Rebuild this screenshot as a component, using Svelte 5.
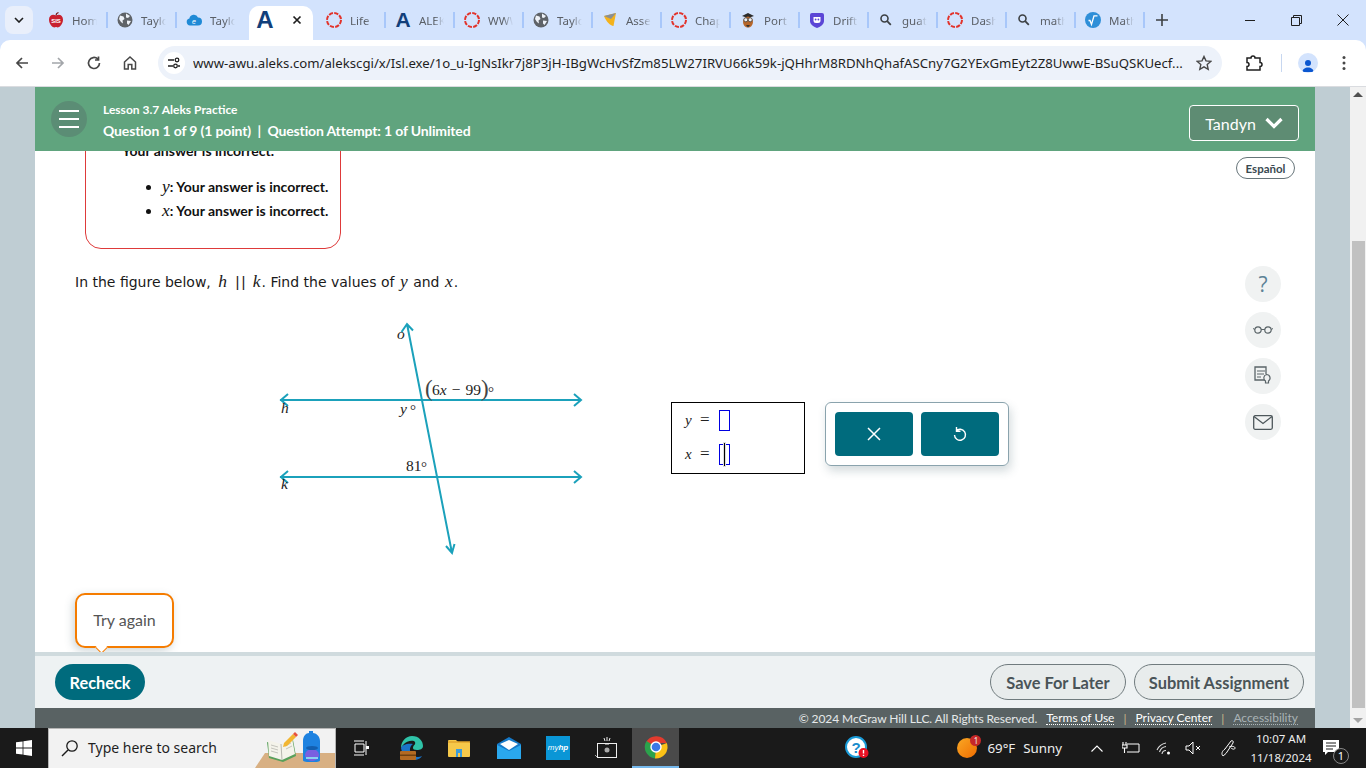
<script>
	const tabs = [
		{ icon: 'sis', label: 'Home' },
		{ icon: 'globe', label: 'Taylor' },
		{ icon: 'cloud', label: 'Taylor' },
		{ icon: 'A', label: '', active: true },
		{ icon: 'ring', label: 'Life' },
		{ icon: 'A', label: 'ALEKS' },
		{ icon: 'ring', label: 'WWW' },
		{ icon: 'globe', label: 'Taylor' },
		{ icon: 'shield', label: 'Assess' },
		{ icon: 'ring', label: 'Chap' },
		{ icon: 'owl', label: 'Port' },
		{ icon: 'drift', label: 'Drift' },
		{ icon: 'search', label: 'guat' },
		{ icon: 'ring', label: 'Dash' },
		{ icon: 'search', label: 'math' },
		{ icon: 'sqrt', label: 'Math' }
	];
	const url =
		'www-awu.aleks.com/alekscgi/x/Isl.exe/1o_u-IgNsIkr7j8P3jH-IBgWcHvSfZm85LW27IRVU66k59k-jQHhrM8RDNhQhafASCny7G2YExGmEyt2Z8UwwE-BSuQSKUecf...';
</script>

{#snippet tabIcon(name)}
	{#if name === 'A'}
		<span class="logo-a">A</span>
	{:else}
		<svg class="fav" viewBox="0 0 16 16" width="16" height="16">
			{#if name === 'sis'}
				<path d="M8 3.500C5 1.800 1 3 1 7.500 1 12 4.500 15.500 6.500 15.500c.8 0 1-.4 1.500-.4s.7.4 1.500.4C11.500 15.500 15 12 15 7.500 15 3 11 1.800 8 3.500z" fill="#c8202f" />
				<path d="M8 3.500C8 2 9 1 10.500.5" stroke="#7a1c1c" stroke-width="1.200" fill="none" />
				<text x="8" y="11" font-size="6" font-weight="700" fill="#fff" text-anchor="middle" font-family="Liberation Sans">SIS</text>
			{:else if name === 'globe'}
				<circle cx="8" cy="8" r="7.500" fill="#5f6368" />
				<path d="M3 3.500l3.500 1 1 2.500-2 1.500.5 3-2-1.500L2 7zM9 1.500l4 2.500-2 2-2-.5zM10 8.500l4 .5-2.500 4-1.500-1.500z" fill="#eef2f8" />
			{:else if name === 'cloud'}
				<path d="M4 13.500a3.500 3.500 0 0 1-.6-6.900A4.500 4.500 0 0 1 12 5.500a4 4 0 0 1 0 8z" fill="#1f8ad6" />
				<text x="8" y="11.500" font-size="7" fill="#fff" text-anchor="middle" font-family="Liberation Sans" font-style="italic">e</text>
			{:else if name === 'ring'}
				<circle cx="8" cy="8" r="7" fill="none" stroke="#e2332b" stroke-width="2" stroke-dasharray="4.200 1.300" />
			{:else if name === 'shield'}
				<path d="M2 4l12-3-2.500 13C8 13.500 4.500 10 2 4z" fill="#f4b21b" />
				<path d="M2 4l12-3-5 6z" fill="#8a8f94" />
			{:else if name === 'owl'}
				<path d="M2 4l6-3 6 3-6 2z" fill="#2b2b2b" />
				<ellipse cx="8" cy="10" rx="5" ry="5.500" fill="#b5662a" />
				<circle cx="5.800" cy="7.800" r="2" fill="#eee" stroke="#333" stroke-width=".7" />
				<circle cx="10.200" cy="7.800" r="2" fill="#eee" stroke="#333" stroke-width=".7" />
				<path d="M6 13l2 2.500 2-2.500z" fill="#333" />
			{:else if name === 'drift'}
				<path d="M3 1h10a2 2 0 0 1 2 2v6c0 3.500-4 6-7 7-3-1-7-3.500-7-7V3a2 2 0 0 1 2-2z" fill="#5b46d6" />
				<path d="M4.500 5h7v3.500a2.500 2.500 0 0 1-2.500 2.500H7a2.500 2.500 0 0 1-2.500-2.500z" fill="#fff" />
				<circle cx="6.600" cy="7.500" r=".9" fill="#5b46d6" />
				<circle cx="9.400" cy="7.500" r=".9" fill="#5b46d6" />
			{:else if name === 'search'}
				<circle cx="6.500" cy="6.500" r="3.500" fill="none" stroke="#3c4043" stroke-width="1.600" />
				<path d="M9.200 9.200l3.600 3.600" stroke="#3c4043" stroke-width="1.800" />
			{:else if name === 'sqrt'}
				<circle cx="8" cy="8" r="8" fill="#2f8fd8" />
				<path d="M3.500 8.500h1.500l1.500 4L9 3.800h3.500" fill="none" stroke="#fff" stroke-width="1.300" />
			{/if}
		</svg>
	{/if}
{/snippet}

<div class="screen">
	<div class="tabstrip">
		<button class="tab-search" aria-label="Search tabs">
			<svg viewBox="0 0 10 6" width="10" height="6"><path d="M1 1l4 4 4-4" fill="none" stroke="#1f1f1f" stroke-width="1.600" /></svg>
		</button>
		<div class="tabs">
			{#each tabs as tab}
				<div class="tab" class:active={tab.active}>
					<span class="fav-wrap">{@render tabIcon(tab.icon)}</span>
					{#if tab.active}
						<svg class="close" viewBox="0 0 10 10" width="10" height="10"><path d="M1.500 1.500l7 7m0-7l-7 7" stroke="#1f1f1f" stroke-width="1.700" /></svg>
					{:else}
						<span class="tab-title">{tab.label}</span>
					{/if}
				</div>
			{/each}
			<svg class="plus" viewBox="0 0 12 12" width="12" height="12"><path d="M6 0v12M0 6h12" stroke="#3c4043" stroke-width="1.600" /></svg>
		</div>
		<div class="window-btns">
			<svg viewBox="0 0 10 10" width="10" height="10"><path d="M0 5.500h10" stroke="#1f1f1f" stroke-width="1" /></svg>
			<svg viewBox="0 0 11 11" width="11" height="11"><path d="M.5 2.500h8v8h-8zM2.500 2.500v-2h8v8h-2" fill="none" stroke="#1f1f1f" stroke-width="1" /></svg>
			<svg viewBox="0 0 12 12" width="12" height="12"><path d="M.5.500l11 11m0-11l-11 11" stroke="#1f1f1f" stroke-width="1" /></svg>
		</div>
	</div>

	<div class="toolbar">
		<svg class="nav nav-back" viewBox="0 0 16 16" width="16" height="16"><path d="M14 8H3M8 3L3 8l5 5" fill="none" stroke="#474747" stroke-width="1.700" /></svg>
		<svg class="nav" viewBox="0 0 16 16" width="16" height="16"><path d="M2 8h11M8 3l5 5-5 5" fill="none" stroke="#a3a6aa" stroke-width="1.700" /></svg>
		<svg class="nav" viewBox="0 0 16 16" width="16" height="16"><path d="M13.500 8A5.500 5.500 0 1 1 11.800 4M12.500 1.500V5H9" fill="none" stroke="#474747" stroke-width="1.700" /></svg>
		<svg class="nav" viewBox="0 0 16 16" width="16" height="16"><path d="M2.500 7L8 2l5.500 5v7H9.800V9.500H6.200V14H2.500z" fill="none" stroke="#474747" stroke-width="1.500" /></svg>
		<div class="omnibox">
			<span class="site-info">
				<svg viewBox="0 0 14 14" width="14" height="14"><path d="M1 4h6M11 10h2M1 10h5" stroke="#1f1f1f" stroke-width="1.400" /><circle cx="10" cy="4" r="1.800" fill="none" stroke="#1f1f1f" stroke-width="1.300" /><circle cx="8.500" cy="10" r="1.800" fill="none" stroke="#1f1f1f" stroke-width="1.300" /></svg>
			</span>
			<span class="url">{url}</span>
			<svg class="star" viewBox="0 0 16 16" width="16" height="16"><path d="M8 1.500l2 4.400 4.800.5-3.600 3.200 1 4.700L8 11.900l-4.200 2.400 1-4.700L1.200 6.400 6 5.900z" fill="none" stroke="#474747" stroke-width="1.400" /></svg>
		</div>
		<svg class="ext" viewBox="0 0 18 18" width="18" height="18"><path d="M2 4h4a2 2 0 0 1 4 0h5v4.500a2 2 0 0 1 0 4V16H2v-3.500a2 2 0 0 0 0-4z" fill="none" stroke="#1f1f1f" stroke-width="1.500" /></svg>
		<span class="tool-sep"></span>
		<span class="avatar">
			<svg viewBox="0 0 14 14" width="14" height="14"><circle cx="7" cy="4" r="3" fill="#0b57d0" /><path d="M1.500 13c0-3 2.500-4.500 5.500-4.500s5.500 1.500 5.500 4.500z" fill="#0b57d0" /></svg>
		</span>
		<svg class="dots" viewBox="0 0 4 16" width="4" height="16"><circle cx="2" cy="2.500" r="1.500" fill="#474747" /><circle cx="2" cy="8" r="1.500" fill="#474747" /><circle cx="2" cy="13.500" r="1.500" fill="#474747" /></svg>
	</div>

	<div class="page">
		<div class="gutter"></div>
		<div class="main">
			<header class="lesson-bar">
				<span class="burger"><i></i><i></i><i></i></span>
				<div class="lesson-text">
					<div class="lesson-name">Lesson 3.7 Aleks Practice</div>
					<div class="lesson-progress">Question 1 of 9 (1 point) &nbsp;|&nbsp; Question Attempt: 1 of Unlimited</div>
				</div>
				<button class="user-btn">
					Tandyn
					<svg viewBox="0 0 18 12" width="18" height="12"><path d="M1.500 2l7.500 7.500L16.500 2" fill="none" stroke="#fff" stroke-width="3.200" /></svg>
				</button>
			</header>

			<div class="workspace">
				<div class="question">
					<div class="feedback">
						<p>Your answer is incorrect.</p>
						<ul>
							<li><i class="math">y</i>: Your answer is incorrect.</li>
							<li><i class="math">x</i>: Your answer is incorrect.</li>
						</ul>
					</div>

					<p class="prompt">
						In the figure below, <i class="math">h</i>&nbsp;<span class="parallel">||</span>&nbsp;<i class="math">k</i>. Find the values of <i class="math">y</i> and <i class="math">x</i>.
					</p>

					<div class="problem">
						<svg class="figure" viewBox="0 0 340 250" width="340" height="250">
							<g fill="none" stroke="#1ba1bb" stroke-width="2">
								<path d="M20 85H321M28 79l-7 6 7 6M314 79l7 6-7 6" />
								<path d="M20 162H321M28 156l-7 6 7 6M314 156l7 6-7 6" />
								<path d="M147 9L192 238M141.500 17L147 9l6 6.500M186 231l6 7 2.500-9" />
							</g>
							<g class="fig-label">
								<text x="137" y="24" font-style="italic" font-size="13">o</text>
								<text x="21" y="98" font-style="italic" font-size="13">h</text>
								<text x="21" y="174" font-style="italic" font-size="13">k</text>
								<text x="140" y="99" font-style="italic">y</text>
								<text x="150" y="100" class="deg">°</text>
								<text x="146" y="156">81</text>
								<text x="161" y="157" class="deg">°</text>
								<text x="165" y="81" class="paren">(</text>
								<text x="172" y="80">6<tspan font-style="italic">x</tspan><tspan dx="5">−</tspan><tspan dx="5">99</tspan></text>
								<text x="221" y="81" class="paren">)</text>
								<text x="228" y="82" class="deg">°</text>
							</g>
						</svg>

						<div class="answers">
							<div class="eq"><i class="math">y</i><span>=</span><span class="slot"></span></div>
							<div class="eq"><i class="math">x</i><span>=</span><span class="slot"><span class="ibeam"></span></span></div>
						</div>

						<div class="tools">
							<button class="tool-btn" aria-label="Clear">
								<svg viewBox="0 0 14 14" width="14" height="14"><path d="M1 1l12 12m0-12L1 13" stroke="#fff" stroke-width="1.500" /></svg>
							</button>
							<button class="tool-btn" aria-label="Undo">
								<svg viewBox="0 0 14 16" width="14" height="16"><path d="M3 5a5.500 5.500 0 1 1-1.500 4M3.500 1v4.200h4" fill="none" stroke="#fff" stroke-width="1.400" /></svg>
							</button>
						</div>
					</div>
				</div>

				<aside class="rail">
					<span class="lang">Español</span>
					<span class="rail-btn help">?</span>
					<span class="rail-btn">
						<svg viewBox="0 0 20 8" width="20" height="8"><circle cx="5" cy="4" r="3.200" fill="none" stroke="#5a6468" stroke-width="1.200" /><circle cx="15" cy="4" r="3.200" fill="none" stroke="#5a6468" stroke-width="1.200" /><path d="M8 3.500h4M1.800 3.500L0 2.500M18.200 3.500L20 2.500" stroke="#5a6468" stroke-width="1" /></svg>
					</span>
					<span class="rail-btn">
						<svg viewBox="0 0 18 20" width="18" height="20"><path d="M12 14H1V1h11v7" fill="none" stroke="#5a6468" stroke-width="1.300" /><path d="M3 5h8M3 8h7M3 11h4" stroke="#5a6468" stroke-width="1.200" /><path d="M12.500 8.500a3.500 3.500 0 0 1 2 6.400V17h-3v-2.100a3.500 3.500 0 0 1 1-6.400z" fill="#f0f2f2" stroke="#5a6468" stroke-width="1.200" /></svg>
					</span>
					<span class="rail-btn">
						<svg viewBox="0 0 20 15" width="20" height="15"><rect x=".7" y=".7" width="18.600" height="13.600" rx="1.500" fill="none" stroke="#4d575b" stroke-width="1.300" /><path d="M1 1.500l9 7 9-7" fill="none" stroke="#4d575b" stroke-width="1.300" /></svg>
					</span>
				</aside>

				<div class="bubble">Try again</div>
			</div>

			<div class="actions">
				<button class="recheck">Recheck</button>
				<div class="actions-right">
					<button class="outline save">Save For Later</button>
					<button class="outline submit">Submit Assignment</button>
				</div>
			</div>

			<footer class="legal">
				<span class="copy">© 2024 McGraw Hill LLC. All Rights Reserved.</span>
				<a href="#terms">Terms of Use</a>
				<span class="bar">|</span>
				<a href="#privacy">Privacy Center</a>
				<span class="bar">|</span>
				<a class="dim" href="#a11y">Accessibility</a>
			</footer>
		</div>
		<div class="gutter right"></div>
		<div class="scrollbar">
			<span class="arrow up"></span>
			<span class="thumb"></span>
			<span class="arrow down"></span>
		</div>
	</div>

	<div class="taskbar">
		<span class="start">
			<svg viewBox="0 0 16 16" width="16" height="16"><path d="M0 2.300l6.600-.9v6.200H0zM7.400 1.300L16 0v7.600H7.400zM0 8.400h6.600v6.200L0 13.700zM7.400 8.400H16V16l-8.600-1.300z" fill="#fff" /></svg>
		</span>
		<div class="searchbox">
			<svg viewBox="0 0 18 18" width="18" height="18"><circle cx="11" cy="7" r="5.200" fill="none" stroke="#1a1a1a" stroke-width="1.300" /><path d="M7 11l-6 6" stroke="#1a1a1a" stroke-width="1.400" /></svg>
			<span>Type here to search</span>
			<svg class="deco" viewBox="0 0 80 40" width="80" height="40">
				<path d="M0 40l10-15h70v15z" fill="#d8b083" />
				<path d="M12 14l14 4 12-6 3 16-13 6-14-4z" fill="#58a05a" />
				<path d="M13 12l13 4 11-6 3 16-13 6-13-4z" fill="#f4f3ea" />
				<path d="M26 16l1 16" stroke="#b8b8b0" />
				<path d="M16 17l7 2M16 20l7 2M16 23l7 2M30 18l6-3M31 21l6-3" stroke="#c4c4bc" />
				<path d="M29 15l9-9 3 3-9 9-4 1z" fill="#f2b632" />
				<path d="M38 6l2-2 3 3-2 2z" fill="#e8523f" />
				<path d="M48 13c0-5 3-8 6-8v-2h4v2c3 0 7 3 7 8v19c0 2-3 2-8 2s-9 0-9-2z" fill="#1e82e0" />
				<ellipse cx="57" cy="27" rx="7" ry="6" fill="#7a5fe0" />
				<path d="M51 29h12v2H51z" fill="#8ad0f0" />
				<ellipse cx="57" cy="20" rx="6" ry="2" fill="#135fb0" />
			</svg>
		</div>
		<svg class="tb-icon taskview" viewBox="0 0 16 16" width="16" height="16"><path d="M1 1h10M1 15h10M2 4h9v8H2zM13 1v14" fill="none" stroke="#fff" stroke-width="1" /><rect x="13" y="6" width="3" height="3" fill="#fff" /></svg>
		<svg class="tb-icon edge" viewBox="0 0 26 26" width="26" height="26">
			<path d="M2 13C2 6 7 1 13 1c7 0 11 5 11 10 0 3-3 4-6 4-3 0-4-1-4-2 0-3 3-3 2-6-1-2-8-2-12 3z" fill="#2fc3a8" />
			<path d="M2 13c1 7 7 12 13 12 4 0 7-2 8-4-4 2-9 1-11-3-2-3-1-7 2-9C8 8 3 10 2 13z" fill="#1a74c8" />
			<rect x="1" y="16" width="16" height="9" rx="1" fill="#b36a22" /><rect x="1" y="19.500" width="16" height="1.500" fill="#70400f" />
		</svg>
		<svg class="tb-icon folder" viewBox="0 0 22 18" width="22" height="18">
			<path d="M0 2a1 1 0 0 1 1-1h7l2 2h11a1 1 0 0 1 1 1v13a1 1 0 0 1-1 1H1a1 1 0 0 1-1-1z" fill="#f5c84a" />
			<path d="M0 3h22" stroke="#e0a52c" stroke-width="1.500" />
			<path d="M8 10h6v8h-2v-4h-2v4H8z" fill="#3c9bd8" />
		</svg>
		<svg class="tb-icon mail" viewBox="0 0 24 22" width="24" height="22">
			<path d="M0 7l12-7 12 7v15H0z" fill="#1579c8" />
			<path d="M3 7l9-4 9 4-9 6z" fill="#fff" />
			<path d="M0 8l12 6 12-6v14H0z" fill="#2aa8ee" />
		</svg>
		<span class="myhp">my<b>hp</b></span>
		<svg class="tb-icon camera" viewBox="0 0 24 22" width="24" height="22">
			<rect x="2.500" y="6.500" width="19" height="14" fill="none" stroke="#eee" stroke-width="1" />
			<circle cx="12" cy="13" r="2.500" fill="#aaa" />
			<path d="M9 1l1 3M12 0v4M15 1l-1 3M10 7h4" stroke="#eee" stroke-width="1" />
			<path d="M0 18l2 2" stroke="#aaa" />
		</svg>
		<span class="chrome-slot">
			<svg viewBox="0 0 24 24" width="24" height="24">
				<path d="M12 12L2 7.500A11.500 11.500 0 0 1 22.800 8H12z" fill="#e33b2e" />
				<path d="M12 12L2.500 6A11.500 11.500 0 0 0 11 23.500z" fill="#2ba24c" />
				<path d="M12 12l-1 11.500A11.500 11.500 0 0 0 22.800 8z" fill="#fbc116" />
				<circle cx="12" cy="12" r="5.700" fill="#fff" /><circle cx="12" cy="12" r="4.300" fill="#3b78e7" />
			</svg>
		</span>
		<span class="helper">
			<svg viewBox="0 0 24 24" width="24" height="24">
				<circle cx="11" cy="11" r="10" fill="#fff" stroke="#1a9bd8" stroke-width="2" />
				<text x="11" y="16.500" text-anchor="middle" font-size="15" font-weight="700" fill="#1a8ccc" font-family="Liberation Sans">?</text>
				<circle cx="18.500" cy="17" r="5" fill="#e81123" />
				<path d="M18.500 14v3.500M18.500 18.700v1.200" stroke="#fff" stroke-width="1.400" />
			</svg>
		</span>
		<span class="spacer"></span>
		<span class="weather">
			<span class="sun"><span class="badge">1</span></span>
			<span class="temp">69°F</span>
			<span class="cond">Sunny</span>
		</span>
		<svg class="tray chev" viewBox="0 0 12 7" width="12" height="7"><path d="M.5 6.500L6 1l5.500 5.500" fill="none" stroke="#fff" stroke-width="1.100" /></svg>
		<svg class="tray batt" viewBox="0 0 18 12" width="18" height="12"><path d="M5 2h12v8H5" fill="none" stroke="#fff" stroke-width="1" /><path d="M1 0v3M4 0v3M0 3h5v3H0zM2.500 6v5" fill="none" stroke="#fff" stroke-width="1.100" /></svg>
		<svg class="tray wifi" viewBox="0 0 15 14" width="15" height="14"><path d="M1 9a12 12 0 0 1 9-7M3.500 11a8 8 0 0 1 6.500-5.500M6 13a4 4 0 0 1 4-3.500" fill="none" stroke="#ddd" stroke-width="1.100" /><circle cx="12.500" cy="12" r="1.500" fill="#fff" /></svg>
		<svg class="tray vol" viewBox="0 0 16 14" width="16" height="14"><path d="M1 5h3l4-4v12L4 9H1z" fill="none" stroke="#fff" stroke-width="1" /><path d="M11 5l4 4m0-4l-4 4" stroke="#fff" stroke-width="1" /></svg>
		<svg class="tray pen" viewBox="0 0 18 18" width="18" height="18"><path d="M3 17C1 15 2 12 5 10l6-8c1-1 3 0 2 2l-6 9c-1 2-3 3-4 4zM9 8c2-1 6-1 6 1s-3 1-4 0" fill="none" stroke="#fff" stroke-width="1" /></svg>
		<span class="clock"><span>10:07 AM</span><span>11/18/2024</span></span>
		<span class="notify">
			<svg viewBox="0 0 18 16" width="18" height="16"><path d="M0 0h16v12H5l-3 3v-3H0z" fill="#fff" /><path d="M3 3h10M3 6h10M3 9h7" stroke="#1a1a1a" stroke-width="1" /></svg>
			<span class="count">1</span>
		</span>
	</div>
</div>

<style>
	:global(body) {
		margin: 0;
		background: #fff;
	}

	.screen {
		width: 1366px;
		height: 768px;
		overflow: hidden;
		display: flex;
		flex-direction: column;
		font-family: 'Noto Sans', 'Open Sans', sans-serif;
		background: #d3e3fd;
	}

	button {
		font-family: inherit;
		cursor: pointer;
	}

	/* browser chrome */
	.tabstrip {
		height: 40px;
		display: flex;
		align-items: flex-end;
		flex-shrink: 0;
	}

	.tab-search {
		width: 28px;
		height: 28px;
		margin: 0 6px 6px 5px;
		padding: 0;
		border: none;
		border-radius: 8px;
		background: #e9effb;
		display: flex;
		align-items: center;
		justify-content: center;
	}

	.tabs {
		display: flex;
		align-items: center;
		height: 34px;
	}

	.tab {
		width: 69px;
		height: 34px;
		box-sizing: border-box;
		padding: 0 0 6px 9px;
		display: flex;
		align-items: center;
		gap: 8px;
		position: relative;
		font-size: 11.500px;
		color: #5a5f66;
	}

	.tab::after {
		content: '';
		position: absolute;
		right: 0;
		top: 6px;
		height: 16px;
		width: 2px;
		background: #a8c7fa;
	}

	.tab.active {
		background: #fff;
		border-radius: 10px 10px 0 0;
		width: 64px;
		margin: 0 4px 0 3px;
		padding-left: 8px;
		gap: 19px;
	}

	.tab.active::after {
		display: none;
	}

	.tab:nth-child(3)::after {
		display: none;
	}

	.fav-wrap {
		width: 16px;
		height: 16px;
		display: flex;
		align-items: center;
		justify-content: center;
		flex-shrink: 0;
	}

	.logo-a {
		font: 700 24px/16px 'Liberation Sans', sans-serif;
		color: #123f7a;
	}

	.tab:not(.active) .logo-a {
		font-size: 21px;
	}

	.tab-title {
		width: 25px;
		overflow: hidden;
		white-space: nowrap;
		-webkit-mask-image: linear-gradient(90deg, #000 60%, transparent);
		mask-image: linear-gradient(90deg, #000 60%, transparent);
	}

	.plus {
		margin: 0 0 6px 11px;
	}

	.window-btns {
		margin-left: auto;
		height: 40px;
		width: 121px;
		display: flex;
		align-items: center;
		justify-content: space-between;
		padding: 0 17px 0 0;
		box-sizing: border-box;
	}

	.toolbar {
		height: 46px;
		flex-shrink: 0;
		display: flex;
		align-items: center;
		background: #fff;
		border-radius: 10px 10px 0 0;
	}

	.nav {
		margin-left: 20px;
	}

	.nav-back {
		margin-left: 14px;
	}

	.omnibox {
		margin-left: 20px;
		width: 1064px;
		height: 34px;
		border-radius: 17px;
		background: #edf2fa;
		display: flex;
		align-items: center;
		box-sizing: border-box;
		padding-left: 5px;
	}

	.site-info {
		width: 22px;
		height: 22px;
		border-radius: 50%;
		background: #fff;
		display: flex;
		align-items: center;
		justify-content: center;
	}

	.url {
		margin-left: 8px;
		font-size: 13.200px;
		color: #1f1f1f;
		white-space: nowrap;
		width: 990px;
		overflow: hidden;
	}

	.star {
		margin-left: 13px;
	}

	.ext {
		margin-left: 23px;
	}

	.tool-sep {
		width: 1px;
		height: 18px;
		background: #c7d7f0;
		margin-left: 18px;
	}

	.avatar {
		width: 20px;
		height: 20px;
		border-radius: 50%;
		background: #d3e3fd;
		margin-left: 16px;
		display: flex;
		align-items: flex-end;
		justify-content: center;
		overflow: hidden;
	}

	.dots {
		margin-left: 24px;
	}

	/* page */
	.page {
		height: 642px;
		flex-shrink: 0;
		display: flex;
		border-top: 1px solid #dadce0;
		box-sizing: border-box;
		background: #fff;
	}

	.gutter {
		width: 35px;
		background: #bfcdd3;
	}

	.main {
		width: 1280px;
		display: flex;
		flex-direction: column;
		font-family: 'Lato', 'Open Sans', sans-serif;
		background: #fff;
	}

	.lesson-bar {
		height: 64px;
		flex-shrink: 0;
		background: #60a47e;
		color: #fff;
		display: flex;
		align-items: center;
		padding: 0 16px;
		box-sizing: border-box;
	}

	.burger {
		width: 36px;
		height: 36px;
		border-radius: 50%;
		background: #5b8d75;
		display: flex;
		flex-direction: column;
		align-items: center;
		justify-content: center;
		gap: 6px;
	}

	.burger i {
		width: 20px;
		height: 2px;
		background: #fff;
	}

	.lesson-text {
		margin: 5px 0 0 16px;
		font-weight: 700;
	}

	.lesson-name {
		font-size: 12px;
		line-height: 16px;
		margin-bottom: 3px;
	}

	.lesson-progress {
		font-size: 14px;
		line-height: 20px;
		letter-spacing: -0.15px;
	}

	.user-btn {
		margin: 8px 0 0 auto;
		width: 110px;
		height: 36px;
		border: 1px solid #fff;
		border-radius: 4px;
		background: #5e8c73;
		color: #fff;
		font-family: 'Lato', sans-serif;
		font-size: 16px;
		display: flex;
		align-items: center;
		justify-content: center;
		gap: 9px;
	}

	.workspace {
		flex: 1;
		min-height: 0;
		display: flex;
		position: relative;
		overflow: hidden;
	}

	.question {
		flex: 1;
		min-width: 0;
	}

	.feedback {
		margin: -30px 0 0 50px;
		width: 256px;
		box-sizing: border-box;
		border: 1px solid #de3a3a;
		border-radius: 0 0 16px 16px;
		padding: 21px 0 25px 36px;
		font-size: 14px;
		font-weight: 700;
		color: #111;
	}

	.feedback p {
		margin: 0 0 16px;
		line-height: 16px;
	}

	.feedback ul {
		margin: 0;
		padding-left: 40px;
	}

	.feedback li {
		line-height: 24px;
		white-space: nowrap;
	}

	.math {
		font-family: 'Liberation Serif', serif;
		font-style: italic;
		font-weight: 400;
		font-size: 1.250em;
		line-height: 0;
	}

	.prompt {
		margin: 23px 0 0 40px;
		font-family: 'DejaVu Sans', sans-serif;
		font-size: 14px;
		line-height: 20px;
		color: #1a1a1a;
	}

	.prompt .math {
		margin: 0 1px;
	}

	.prompt .math:first-of-type {
		margin-left: 3px;
	}

	.parallel {
		font-family: 'Liberation Sans', sans-serif;
		font-size: 15px;
		line-height: 0;
		letter-spacing: 2px;
		margin: 0 0 0 3px;
	}

	.problem {
		display: flex;
		align-items: flex-start;
		margin: 23px 0 0 225px;
	}

	.figure {
		flex-shrink: 0;
	}

	.fig-label text {
		font-family: 'Liberation Serif', serif;
		font-size: 15.500px;
		fill: #222;
	}

	.fig-label .paren {
		font-size: 23px;
		fill: #444;
	}

	.fig-label .deg {
		font-size: 15px;
	}

	.answers {
		margin: 87px 0 0 71px;
		width: 134px;
		height: 72px;
		box-sizing: border-box;
		border: 1px solid #000;
		padding: 0 0 0 13px;
		font-family: 'Liberation Serif', serif;
		font-size: 17px;
		color: #222;
	}

	.eq {
		height: 34px;
		display: flex;
		align-items: center;
		gap: 7px;
	}

	.eq .math {
		font-size: 15px;
		line-height: normal;
		width: 8px;
	}

	.slot {
		margin-left: 2px;
		width: 11px;
		height: 21px;
		box-sizing: border-box;
		border: 1px solid #0000e0;
		position: relative;
	}

	.ibeam {
		position: absolute;
		left: 4px;
		top: -2px;
		height: 23px;
		width: 1px;
		background: #000;
		outline: 1px solid #ddd;
	}

	.tools {
		margin: 87px 0 0 20px;
		width: 184px;
		height: 64px;
		box-sizing: border-box;
		border: 1px solid #8aa3ad;
		border-radius: 6px;
		padding: 9px;
		display: flex;
		gap: 8px;
		box-shadow: 2px 5px 10px rgba(60, 90, 100, 0.22);
	}

	.tool-btn {
		width: 78px;
		height: 44px;
		border: none;
		border-radius: 4px;
		background: #006b7d;
		display: flex;
		align-items: center;
		justify-content: center;
	}

	.rail {
		width: 90px;
		flex-shrink: 0;
		display: flex;
		flex-direction: column;
		align-items: flex-start;
	}

	.lang {
		margin: 6px 0 0 11px;
		width: 59px;
		height: 22px;
		box-sizing: border-box;
		border: 1px solid #67757a;
		border-radius: 11px;
		font-size: 11.500px;
		font-weight: 700;
		color: #3a4a52;
		display: flex;
		align-items: center;
		justify-content: center;
	}

	.rail-btn {
		width: 36px;
		height: 36px;
		margin: 10px 0 0 20px;
		border-radius: 50%;
		background: #f0f2f2;
		display: flex;
		align-items: center;
		justify-content: center;
	}

	.rail-btn.help {
		margin-top: 87px;
		font-family: 'Open Sans', sans-serif;
		font-size: 21px;
		color: #5d8296;
	}

	.bubble {
		position: absolute;
		left: 40px;
		bottom: 4px;
		width: 99px;
		height: 55px;
		box-sizing: border-box;
		border: 2px solid #f57c00;
		border-radius: 10px;
		padding-bottom: 3px;
		background: #fff;
		color: #555;
		font-size: 16px;
		display: flex;
		align-items: center;
		justify-content: center;
		box-shadow: -2px 3px 8px rgba(60, 90, 100, 0.25);
	}

	.bubble::after {
		content: '';
		position: absolute;
		left: 20px;
		bottom: -6px;
		width: 8px;
		height: 8px;
		background: #fff;
		border-right: 1.500px solid #f57c00;
		border-bottom: 1.500px solid #f57c00;
		transform: rotate(45deg);
	}

	.actions {
		height: 56px;
		flex-shrink: 0;
		box-sizing: border-box;
		border-top: 4px solid #d0dbde;
		background: #eef2f3;
		display: flex;
		align-items: flex-start;
		padding: 8px 11px 0 20px;
		font-family: 'Lato', sans-serif;
	}

	.recheck {
		width: 90px;
		height: 36px;
		border: none;
		border-radius: 18px;
		background: #006b7d;
		color: #fff;
		font-family: inherit;
		font-size: 16.300px;
		font-weight: 700;
	}

	.actions-right {
		margin-left: auto;
		display: flex;
		gap: 8px;
	}

	.outline {
		height: 36px;
		border: 1px solid #707b7e;
		border-radius: 18px;
		background: #e8ecec;
		color: #4a5458;
		font-family: inherit;
		font-size: 16.400px;
		font-weight: 700;
		padding: 0;
	}

	.save {
		width: 136px;
	}

	.submit {
		width: 170px;
	}

	.legal {
		height: 20px;
		flex-shrink: 0;
		background: #596263;
		color: #e6e9ea;
		font-size: 12px;
		display: flex;
		align-items: center;
		justify-content: flex-end;
		padding-right: 17px;
		gap: 9px;
	}

	.legal .copy {
		letter-spacing: -0.07px;
	}

	.legal a {
		color: #fff;
		text-decoration: none;
		border-bottom: 1px dotted #fff;
		line-height: 13px;
	}

	.legal a.dim {
		color: #a9b3b6;
		border-bottom-color: #a9b3b6;
	}

	.legal .bar {
		color: #c9b98a;
	}

	.scrollbar {
		width: 16px;
		background: #f1f1f1;
		position: relative;
	}

	.thumb {
		position: absolute;
		left: 2px;
		right: 1px;
		top: 154px;
		height: 467px;
		background: #c1c1c1;
	}

	.arrow {
		position: absolute;
		left: 3px;
		border-left: 5px solid transparent;
		border-right: 5px solid transparent;
	}

	.arrow.up {
		top: 5px;
		border-bottom: 5px solid #505050;
	}

	.arrow.down {
		bottom: 5px;
		border-top: 5px solid #a3a3a3;
	}

	/* windows taskbar */
	.taskbar {
		height: 40px;
		flex-shrink: 0;
		background: #1a1a1a;
		color: #fff;
		display: flex;
		align-items: center;
		font-family: 'Noto Sans', 'Open Sans', sans-serif;
	}

	.start {
		width: 48px;
		display: flex;
		justify-content: center;
	}

	.searchbox {
		width: 288px;
		height: 40px;
		box-sizing: border-box;
		background: #f2f2f2;
		border: 1px solid #b5b5b5;
		border-bottom: none;
		display: flex;
		align-items: center;
		color: #1f1f1f;
		font-size: 14px;
		padding: 0 0 2px 12px;
		position: relative;
	}

	.searchbox span {
		margin-left: 9px;
	}

	.deco {
		position: absolute;
		right: 0;
		bottom: 0;
	}

	.tb-icon {
		flex-shrink: 0;
	}

	.taskview {
		margin-left: 17px;
	}

	.edge {
		margin-left: 30px;
	}

	.folder {
		margin-left: 23px;
	}

	.mail {
		margin-left: 27px;
	}

	.myhp {
		margin-left: 25px;
		width: 24px;
		height: 24px;
		background: #0a96d6;
		font: italic 8px/24px 'Liberation Sans', sans-serif;
		text-align: center;
	}

	.camera {
		margin-left: 25px;
	}

	.chrome-slot {
		margin-left: 13px;
		width: 47px;
		height: 40px;
		box-sizing: border-box;
		background: #4a4a4a;
		border-bottom: 2px solid #76b9ed;
		display: flex;
		align-items: center;
		justify-content: center;
	}

	.helper {
		margin-left: 166px;
		display: flex;
	}

	.spacer {
		flex: 1;
	}

	.weather {
		display: flex;
		align-items: center;
		font-size: 13.300px;
		color: #eee;
	}

	.sun {
		width: 20px;
		height: 20px;
		border-radius: 50%;
		background: linear-gradient(135deg, #f9a825, #ef6c00);
		position: relative;
	}

	.badge {
		position: absolute;
		right: -4px;
		top: -3px;
		width: 11px;
		height: 11px;
		border-radius: 50%;
		background: #c62828;
		font-size: 8px;
		line-height: 11px;
		text-align: center;
	}

	.temp {
		margin-left: 10px;
	}

	.cond {
		margin-left: 8px;
	}

	.tray {
		flex-shrink: 0;
	}

	.chev {
		margin-left: 29px;
	}

	.batt {
		margin-left: 19px;
	}

	.wifi {
		margin-left: 16px;
	}

	.vol {
		margin-left: 14px;
	}

	.pen {
		margin-left: 19px;
	}

	.clock {
		margin-left: 13px;
		width: 60px;
		display: flex;
		flex-direction: column;
		align-items: center;
		font-size: 11.500px;
		line-height: 19px;
		white-space: nowrap;
		color: #eee;
	}

	.notify {
		margin: 0 25px 0 12px;
		position: relative;
		display: flex;
	}

	.count {
		position: absolute;
		right: -8px;
		bottom: -8px;
		width: 14px;
		height: 14px;
		border-radius: 50%;
		background: #1a1a1a;
		border: 1px solid #888;
		font-size: 11px;
		line-height: 14px;
		text-align: center;
	}
</style>
